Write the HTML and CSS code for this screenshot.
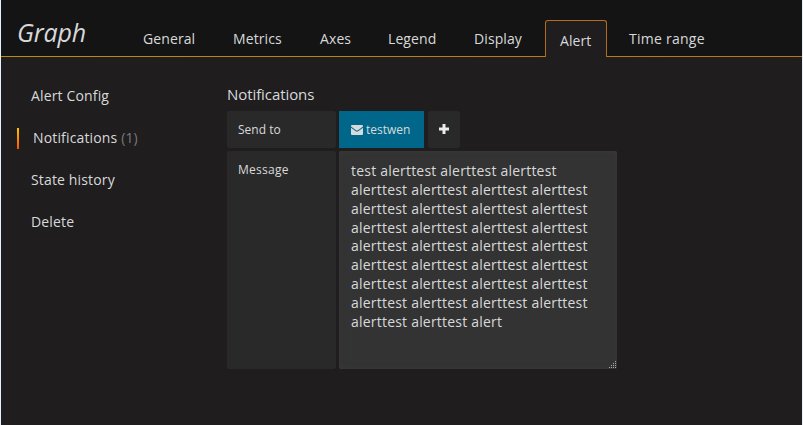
FILE: index.html
```html
<!DOCTYPE html>
<html lang="en">
<head>
<meta charset="utf-8">
<title>Graph</title>
<link rel="stylesheet" href="styles.css">
</head>
<body>
<div class="panel">
  <header class="header">
    <h1 class="title">Graph</h1>
    <nav class="tabs">
      <a class="tab t-general">General</a>
      <a class="tab t-metrics">Metrics</a>
      <a class="tab t-axes">Axes</a>
      <a class="tab t-legend">Legend</a>
      <a class="tab t-display">Display</a>
      <a class="tab active">Alert</a>
      <a class="tab t-time">Time range</a>
    </nav>
  </header>
  <div class="body">
    <aside class="side">
      <a class="side-item">Alert Config</a>
      <a class="side-item current">Notifications <span class="muted">(1)</span></a>
      <a class="side-item">State history</a>
      <a class="side-item">Delete</a>
    </aside>
    <main class="content">
      <h2 class="heading">Notifications</h2>
      <div class="row send">
        <span class="label">Send to</span>
        <span class="chip"><svg class="mail" viewBox="0 0 12 10"><path d="M1 0h10q1 0 1 1v.4L7 5.2q-1 .7-2 0L0 1.4V1q0-1 1-1zM0 2.7l4.5 3.4q1.5 1 3 0L12 2.7V9q0 1-1 1H1q-1 0-1-1z"/></svg><span>testwen</span></span>
        <span class="add"><svg class="plus" viewBox="0 0 10 10"><path d="M3.5 0h3v3.5H10v3H6.5V10h-3V6.5H0v-3h3.5z"/></svg></span>
      </div>
      <div class="row message">
        <span class="label wide">Message</span>
        <div class="textarea">test alerttest alerttest alerttest<br>alerttest alerttest alerttest alerttest<br>alerttest alerttest alerttest alerttest<br>alerttest alerttest alerttest alerttest<br>alerttest alerttest alerttest alerttest<br>alerttest alerttest alerttest alerttest<br>alerttest alerttest alerttest alerttest<br>alerttest alerttest alerttest alerttest<br>alerttest alerttest alert<svg class="grip" viewBox="0 0 8 8"><path d="M7 0h1v1H7zM5 2h1v1H5zM7 2h1v1H7zM3 4h1v1H3zM5 4h1v1H5zM7 4h1v1H7zM1 6h1v1H1zM3 6h1v1H3zM5 6h1v1H5zM7 6h1v1H7z"/></svg></div>
      </div>
    </main>
  </div>
</div>
</body>
</html>
```
FILE: styles.css
```css
* { box-sizing: border-box; }
body {
  margin: 0;
  height: 425px;
  overflow: hidden;
  background: #e7eff8;
  color: #d8d9da;
  font: 14px/20px "Open Sans", sans-serif;
}
.panel { width: 801px; height: 425px; margin-left: 1px; background: #1f1d1e; }
.header {
  display: flex;
  height: 57px;
  background: linear-gradient(90deg, #b88d0e, #bc7418) 0 56px / 100% 1px no-repeat #141414;
}
.title {
  width: 142px;
  margin: 0;
  padding: 15px 0 0 16px;
  font-size: 25px;
  line-height: 34px;
  font-weight: 400;
  font-style: italic;
  letter-spacing: -0.15px;
}
.tabs { display: flex; }
.tab { padding-top: 29px; white-space: nowrap; letter-spacing: 0.1px; }
.t-general { width: 90px; }
.t-metrics { width: 87px; }
.t-axes { width: 68px; }
.t-legend { width: 86px; }
.t-display { width: 71px; }
.t-time { margin-left: 22px; letter-spacing: 0.25px; }
.active {
  width: 62px;
  height: 37px;
  margin-top: 20px;
  padding: 10px 0 0 14px;
  border: 1px solid #b36d1d;
  border-bottom: 0;
  border-radius: 3px 3px 0 0;
  background: #1f1d1e;
}
.body { display: flex; }
.side { width: 226px; padding: 29px 0 0 16px; letter-spacing: 0.15px; }
.side-item { display: block; height: 21px; margin-bottom: 21px; padding-left: 14px; line-height: 19px; }
.current { border-left: 2px solid; border-image: linear-gradient(#ffc900, #ff4d00) 1; }
.muted { color: #797979; }
.heading { height: 24px; margin: 26px 0 4px; font-size: 15px; line-height: 22px; font-weight: 400; letter-spacing: -0.08px; }
.row { display: flex; }
.send { height: 37px; margin-bottom: 3px; line-height: 37px; }
.label { width: 109px; margin-right: 3px; padding-left: 11px; border-radius: 2px; background: #292929; font-size: 12px; line-height: 37px; }
.wide { letter-spacing: 0.25px; }
.chip { display: flex; align-items: center; gap: 3px; width: 85px; padding-left: 12px; background: #00678b; font-size: 12px; }
.mail { width: 12px; height: 10px; margin-top: 1px; fill: #d8d9da; }
.add { display: flex; align-items: center; justify-content: center; width: 32px; margin-left: 4px; border-radius: 2px; background: #292929; }
.plus { width: 10px; height: 10px; margin: 0 1px 1px 0; fill: #ececec; }
.message { height: 218px; }
.textarea {
  position: relative;
  width: 278px;
  padding: 11px 0 0 12px;
  border-radius: 2px;
  background: #333;
  box-shadow: inset 0 0 5px #3b3b3b;
  line-height: 18.85px;
  letter-spacing: 0.21px;
  white-space: nowrap;
}
.grip { position: absolute; right: 1px; bottom: 0; width: 8px; height: 8px; fill: #aaa; }
```
